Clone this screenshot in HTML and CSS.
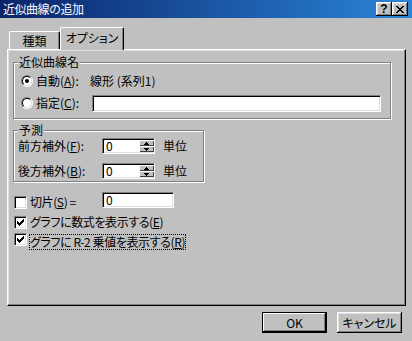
FILE: index.html
```html
<!DOCTYPE html>
<html lang="ja">
<head>
<meta charset="utf-8">
<title>近似曲線の追加</title>
<link rel="stylesheet" href="styles.css">
</head>
<body>
<div class="titlebar">
  <span class="title">近似曲線の追加</span>
  <span class="tbtns">
    <span class="tbtn help">?</span>
    <span class="tbtn close"><svg width="8" height="7" viewBox="0 0 8 7" shape-rendering="crispEdges"><path d="M0 0h2v1H0zM6 0h2v1H6zM1 1h2v1H1zM5 1h2v1H5zM2 2h4v1H2zM3 3h2v1H3zM2 4h4v1H2zM1 5h2v1H1zM5 5h2v1H5zM0 6h2v1H0zM6 6h2v1H6z" fill="#000"/></svg></span>
  </span>
</div>
<div class="tabs">
  <div class="tab">種類</div>
  <div class="tab active">オプション</div>
</div>
<div class="panel">
  <div class="group g1">
    <div class="legend">近似曲線名</div>
    <div class="row">
      <span class="radio"><i><b></b></i></span>
      <span class="w1">自動(<u>A</u>):</span>
      <span>線形 (系列1)</span>
    </div>
    <div class="row">
      <span class="radio"><i></i></span>
      <span class="w2">指定(<u>C</u>):</span>
      <span class="edit name"></span>
    </div>
  </div>
  <div class="group g2">
    <div class="legend">予測</div>
    <div class="frow f1">
      <span class="flbl">前方補外(<u>F</u>):</span>
      <span class="edit spin">
        <span class="val">0</span>
        <span class="spbtns">
          <span class="spb"><svg width="5" height="3" viewBox="0 0 5 3" shape-rendering="crispEdges"><path d="M2 0h1v1h1v1h1v1H0V2h1V1h1z" fill="#000"/></svg></span>
          <span class="spb"><svg width="5" height="3" viewBox="0 0 5 3" shape-rendering="crispEdges"><path d="M0 0h5v1H4v1H3v1H2V2H1V1H0z" fill="#000"/></svg></span>
        </span>
      </span>
      <span class="unit">単位</span>
    </div>
    <div class="frow f2">
      <span class="flbl">後方補外(<u>B</u>):</span>
      <span class="edit spin">
        <span class="val">0</span>
        <span class="spbtns">
          <span class="spb"><svg width="5" height="3" viewBox="0 0 5 3" shape-rendering="crispEdges"><path d="M2 0h1v1h1v1h1v1H0V2h1V1h1z" fill="#000"/></svg></span>
          <span class="spb"><svg width="5" height="3" viewBox="0 0 5 3" shape-rendering="crispEdges"><path d="M0 0h5v1H4v1H3v1H2V2H1V1H0z" fill="#000"/></svg></span>
        </span>
      </span>
      <span class="unit">単位</span>
    </div>
  </div>
  <div class="crow c1">
    <span class="chk"></span>
    <span class="clbl w3">切片(<u>S</u>) =</span>
    <span class="edit icpt"><span class="val">0</span></span>
  </div>
  <div class="crow c2">
    <span class="chk"><svg width="7" height="7" viewBox="0 0 7 7" shape-rendering="crispEdges"><path d="M0 2h1v3H0zM1 3h1v3H1zM2 4h1v3H2zM3 3h1v3H3zM4 2h1v3H4zM5 1h1v3H5zM6 0h1v3H6z" fill="#000"/></svg></span>
    <span class="clbl">グラフに数式を表示する(<u>E</u>)</span>
  </div>
  <div class="crow c3">
    <span class="chk"><svg width="7" height="7" viewBox="0 0 7 7" shape-rendering="crispEdges"><path d="M0 2h1v3H0zM1 3h1v3H1zM2 4h1v3H2zM3 3h1v3H3zM4 2h1v3H4zM5 1h1v3H5zM6 0h1v3H6z" fill="#000"/></svg></span>
    <span class="clbl focus">グラフに R-2 乗値を表示する(<u>R</u>)</span>
  </div>
</div>
<div class="buttons">
  <span class="btn default">OK</span>
  <span class="btn">キャンセル</span>
</div>
</body>
</html>
```

FILE: styles.css
```css
* { box-sizing: border-box; }
html, body { margin: 0; padding: 0; }
body {
  width: 412px;
  height: 341px;
  overflow: hidden;
  background: #c0c0c0;
  color: #000;
  font-family: "Noto Sans CJK JP", "Noto Sans", sans-serif;
  font-size: 12px;
  line-height: 14px;
  font-feature-settings: "palt";
}
u { text-decoration: underline; text-underline-offset: 1px; }

/* title bar */
.titlebar {
  height: 18px;
  display: flex;
  align-items: center;
  justify-content: space-between;
  padding: 0 4px 0 3px;
  background: linear-gradient(to right, #0a246a, #2a84d8);
  color: #fff;
}
.title { line-height: 14px; font-feature-settings: normal; letter-spacing: -0.5px; }
.tbtns { display: flex; }
.tbtn {
  width: 16px;
  height: 14px;
  display: flex;
  align-items: center;
  justify-content: center;
  background: #c0c0c0;
  color: #000;
  box-shadow: inset -1px -1px #000, inset 1px 1px #fff, inset -2px -2px #808080, inset 2px 2px #dfdfdf;
}
.help { font: bold 12px/12px "Liberation Sans", sans-serif; padding-bottom: 1px; }

/* tabs */
.tabs {
  display: flex;
  align-items: flex-end;
  height: 31px;
  padding-left: 9px;
}
.tab {
  width: 51px;
  height: 18px;
  display: flex;
  align-items: center;
  justify-content: center;
  border-top: 1px solid #fff;
  border-left: 1px solid #fff;
  border-right: 1px solid #000;
  border-radius: 2px 2px 0 0;
  box-shadow: inset -1px 0 #808080;
  background: #c0c0c0;
}
.tab.active {
  width: 64px;
  height: 23px;
  margin-bottom: -1px;
  padding-bottom: 2px;
  position: relative;
  z-index: 1;
}

/* panel */
.panel {
  margin-left: 7px;
  width: 399px;
  height: 257px;
  border: 1px solid;
  border-color: #fff #000 #000 #fff;
  box-shadow: inset -1px -1px #808080, inset 1px 1px #dfdfdf;
}

.group {
  margin-left: 5px;
  border: 1px solid #808080;
  box-shadow: inset 1px 1px #fff, 1px 1px #fff;
}
.g1 { margin-top: 12px; width: 378px; height: 57px; }
.g2 { margin-top: 11px; width: 191px; height: 52px; }
.legend {
  margin: -8px 0 0 4px;
  padding: 0 1px;
  width: max-content;
  background: #c0c0c0;
  line-height: 14px;
}

.row {
  display: flex;
  align-items: center;
  height: 20px;
  margin-top: 2px;
  padding-left: 7px;
}
.radio {
  width: 12px;
  height: 12px;
  margin-right: 3px;
  border-radius: 50%;
  border: 1px solid;
  border-color: #808080 #fff #fff #808080;
  flex: none;
}
.radio i {
  display: flex;
  align-items: center;
  justify-content: center;
  width: 10px;
  height: 10px;
  border-radius: 50%;
  border: 1px solid;
  border-color: #000 #dfdfdf #dfdfdf #000;
  background: #fff;
}
.radio b {
  display: block;
  width: 4px;
  height: 4px;
  border-radius: 50%;
  background: #000;
}
.w1 { width: 54px; }
.w2 { width: 56px; }

.edit {
  background: #fff;
  border: 1px solid;
  border-color: #808080 #fff #fff #808080;
  box-shadow: inset 1px 1px #000, inset -1px -1px #dfdfdf;
}
.name { width: 289px; height: 17px; }

.frow {
  display: flex;
  align-items: center;
  height: 16px;
  padding-left: 4px;
}
.f1 { margin-top: 1px; }
.f2 { margin-top: 9px; }
.flbl { width: 84px; }
.spin {
  width: 53px;
  height: 16px;
  display: flex;
  padding: 1px 0 1px 1px;
}
.val { flex: 1; padding-left: 2px; line-height: 12px; }
.spbtns { width: 15px; display: flex; flex-direction: column; }
.spb {
  flex: 1;
  display: flex;
  align-items: center;
  justify-content: center;
  background: #c0c0c0;
  box-shadow: inset 1px 1px #fff, inset -1px -1px #404040;
}
.unit { margin-left: 8px; }

.crow {
  display: flex;
  align-items: flex-start;
  margin-left: 6px;
}
.chk {
  width: 13px;
  height: 13px;
  flex: none;
  display: flex;
  align-items: center;
  justify-content: center;
  background: #fff;
  border: 1px solid;
  border-color: #808080 #fff #fff #808080;
  box-shadow: inset 1px 1px #000, inset -1px -1px #dfdfdf;
}
.clbl { margin-left: 3px; line-height: 14px; letter-spacing: -0.4px; }
.w3 { width: 72px; }
.icpt { width: 72px; height: 16px; }
.icpt .val { padding-left: 3px; line-height: 14px; }
.c1 { margin-top: 10px; }
.c1 .chk { margin-top: 4px; }
.c1 .clbl { margin-top: 3px; }
.c2 { margin-top: 5px; }
.c2 .chk { margin-top: 2px; }
.c2 .clbl { margin-top: 1px; }
.c3 { margin-top: 2px; }
.c3 .chk { margin-top: 2px; }
.focus {
  margin: 3px 0 0 2px;
  border: 1px dotted #000;
  padding: 0;
}

/* buttons */
.buttons {
  display: flex;
  justify-content: flex-end;
  gap: 10px;
  padding-right: 10px;
  margin-top: 6px;
}
.btn {
  width: 65px;
  height: 21px;
  display: flex;
  align-items: center;
  justify-content: center;
  background: #c0c0c0;
  box-shadow: inset -1px -1px #000, inset 1px 1px #fff, inset -2px -2px #808080, inset 2px 2px #dfdfdf;
}
.btn.default {
  border: 1px solid #000;
  box-shadow: inset -1px -1px #000, inset 1px 1px #fff, inset -2px -2px #808080;
}
```
